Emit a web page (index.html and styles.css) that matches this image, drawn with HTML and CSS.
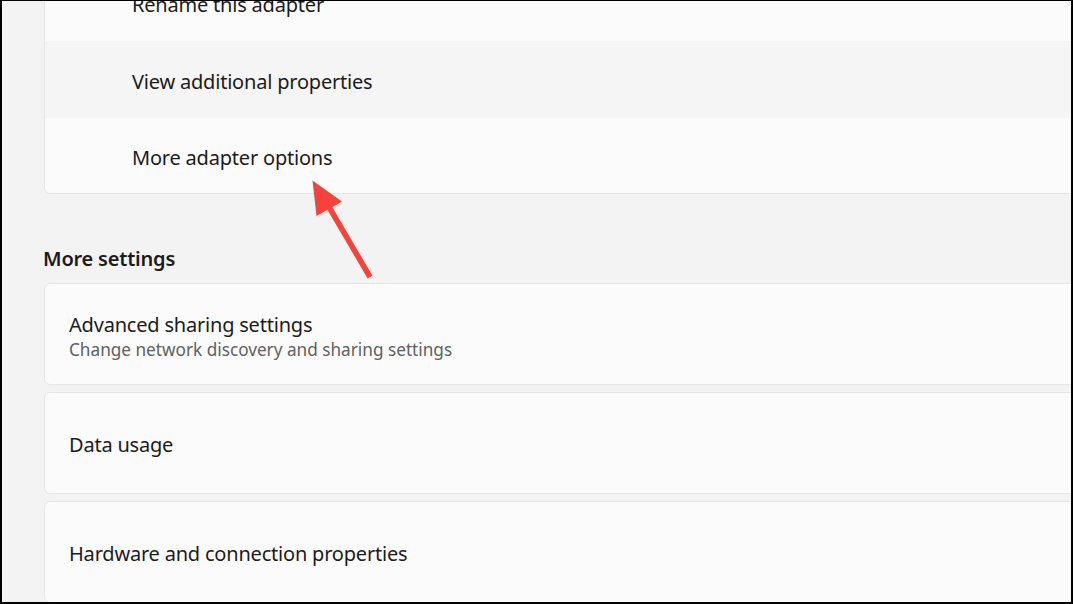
FILE: index.html
```html
<!DOCTYPE html>
<html lang="en">
<head>
<meta charset="utf-8">
<title>Advanced network settings</title>
<link rel="stylesheet" href="styles.css">
</head>
<body>
<div class="frame">
  <main class="content">
    <section class="card card-list">
      <div class="row"><span class="row-label">Rename this adapter</span></div>
      <div class="row row-hover"><span class="row-label">View additional properties</span></div>
      <div class="row row-last"><span class="row-label">More adapter options</span></div>
    </section>

    <h2 class="section-title">More settings</h2>

    <div class="stack">
      <section class="card card-item">
        <div class="item-title">Advanced sharing settings</div>
        <div class="item-sub">Change network discovery and sharing settings</div>
      </section>
      <section class="card card-item">
        <div class="item-title">Data usage</div>
      </section>
      <section class="card card-item">
        <div class="item-title">Hardware and connection properties</div>
      </section>
    </div>
  </main>

  <svg class="annotation" width="1073" height="604" viewBox="0 0 1073 604" aria-hidden="true">
    <line x1="329" y1="207" x2="370" y2="277" stroke="#f4433a" stroke-width="5.5" stroke-linecap="butt"/>
    <polygon points="312.5,180.5 342,201.5 316.5,216" fill="#f4433a"/>
  </svg>
</div>
</body>
</html>
```

FILE: styles.css
```css
html, body {
  margin: 0;
  padding: 0;
}

body {
  font-family: "Noto Sans", "Open Sans", sans-serif;
  color: #1b1b1b;
  background: #000;
}

.frame {
  position: relative;
  box-sizing: border-box;
  width: 1073px;
  height: 604px;
  border-style: solid;
  border-color: #000;
  border-width: 1px 2px 2px 2px;
  background: #f3f3f3;
  overflow: hidden;
}

.content {
  display: flex;
  flex-direction: column;
  padding-left: 42px;
  margin-top: -38px;
  margin-right: -40px;
}

.card {
  background: #fbfbfb;
  border: 1px solid #e5e5e5;
  border-radius: 6px;
}

.card-list {
  display: flex;
  flex-direction: column;
  overflow: hidden;
}

.row {
  box-sizing: border-box;
  height: 77px;
  display: flex;
  align-items: center;
  padding: 5px 0 0 87px;
}

.row-last {
  height: 75px;
}

.row-hover {
  background: #f5f5f5;
}

.row-label {
  font-size: 20px;
  line-height: 28px;
  letter-spacing: -0.2px;
}

.section-title {
  margin: 51px 0 0 -1px;
  font-size: 20px;
  line-height: 28px;
  font-weight: 600;
  letter-spacing: -0.2px;
  color: #1b1b1b;
}

.stack {
  display: flex;
  flex-direction: column;
  gap: 7px;
  margin-top: 10px;
}

.card-item {
  box-sizing: border-box;
  height: 102px;
  display: flex;
  flex-direction: column;
  justify-content: center;
  padding: 4px 0 0 24px;
}

.item-title {
  font-size: 20px;
  line-height: 28px;
  letter-spacing: -0.2px;
}

.item-sub {
  font-size: 17.2px;
  line-height: 22px;
  color: #606060;
}

.annotation {
  position: absolute;
  left: -2px;
  top: -1px;
  pointer-events: none;
}
```
